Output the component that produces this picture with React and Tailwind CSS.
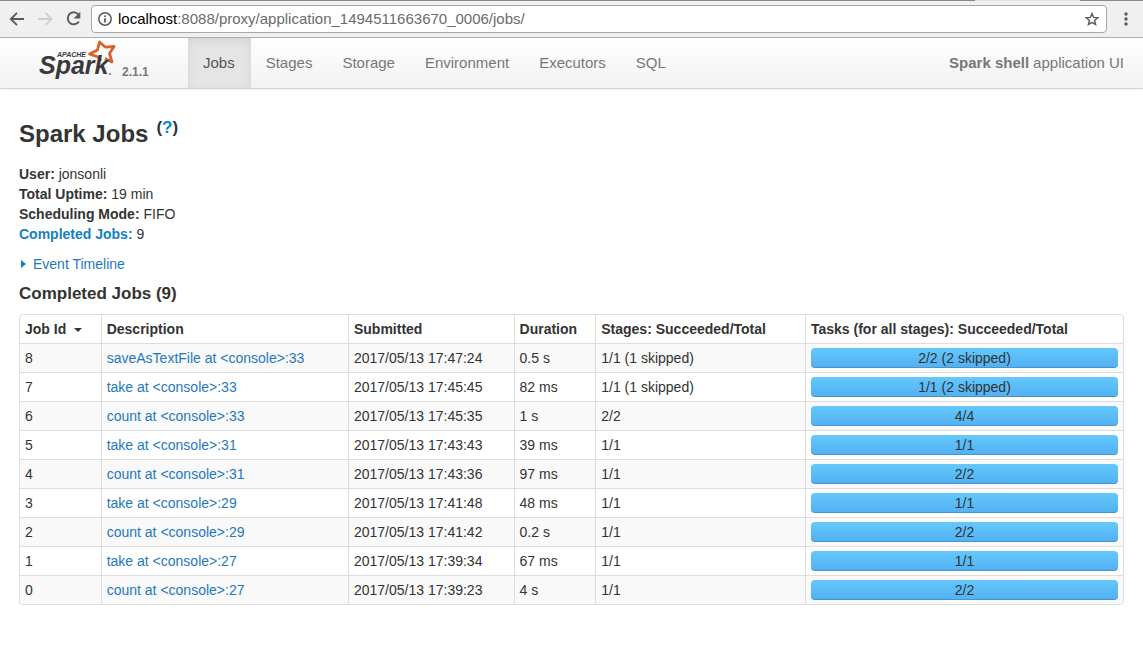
import React from 'react';

const tabs = ['Jobs', 'Stages', 'Storage', 'Environment', 'Executors', 'SQL'];

const jobs = [
  [8, 'saveAsTextFile at <console>:33', '2017/05/13 17:47:24', '0.5 s', '1/1 (1 skipped)', '2/2 (2 skipped)'],
  [7, 'take at <console>:33', '2017/05/13 17:45:45', '82 ms', '1/1 (1 skipped)', '1/1 (2 skipped)'],
  [6, 'count at <console>:33', '2017/05/13 17:45:35', '1 s', '2/2', '4/4'],
  [5, 'take at <console>:31', '2017/05/13 17:43:43', '39 ms', '1/1', '1/1'],
  [4, 'count at <console>:31', '2017/05/13 17:43:36', '97 ms', '1/1', '2/2'],
  [3, 'take at <console>:29', '2017/05/13 17:41:48', '48 ms', '1/1', '1/1'],
  [2, 'count at <console>:29', '2017/05/13 17:41:42', '0.2 s', '1/1', '2/2'],
  [1, 'take at <console>:27', '2017/05/13 17:39:34', '67 ms', '1/1', '1/1'],
  [0, 'count at <console>:27', '2017/05/13 17:39:23', '4 s', '1/1', '2/2'],
];

const columns = [
  ['Job Id', 'w-[7.4%]'],
  ['Description', 'w-[22.4%]'],
  ['Submitted', 'w-[15%]'],
  ['Duration', 'w-[7.4%]'],
  ['Stages: Succeeded/Total', 'w-[19%]'],
  ['Tasks (for all stages): Succeeded/Total', 'w-[28.8%]'],
];

function BrowserBar() {
  return (
    <div className="border-b border-[#b0aeb0] bg-[#f1f0f1]">
      <div className="flex h-px">
        <div className="flex-1 bg-[#8b8789]" />
        <div className="w-[105px] bg-[#e4e2e4]" />
        <div className="w-[63px] bg-[#8b8789]" />
      </div>
      <div className="flex h-9 items-center pr-2.5 pl-[9px]">
        <button aria-label="Back" className="mr-3 text-[#5a5a5a]">
          <svg width="16" height="16" viewBox="0 0 16 16" fill="none" stroke="currentColor" strokeWidth="1.900">
            <path d="M15 8H2.500M8 1.800 1.800 8 8 14.200" />
          </svg>
        </button>
        <button aria-label="Forward" disabled className="mr-3 text-[#cfcfcf]">
          <svg width="16" height="16" viewBox="0 0 16 16" fill="none" stroke="currentColor" strokeWidth="1.900">
            <path d="M1 8h13M8.500 1.800 14.700 8l-6.200 6.200" />
          </svg>
        </button>
        <button aria-label="Reload" className="mr-2 text-[#5a5a5a]">
          <svg width="18" height="18" viewBox="0 0 18 18" fill="none" stroke="currentColor" strokeWidth="2">
            <path d="M13.800 5A6 6 0 1 0 13.900 11.500" />
            <path d="M15.300 1.800v6.700H8.600z" fill="currentColor" stroke="none" />
          </svg>
        </button>
        <div className="flex h-7 min-w-0 flex-1 items-center rounded border border-[#a9a7a9] bg-white pr-[7px] pl-1.5">
          <svg className="mr-1.5 shrink-0" width="14" height="14" viewBox="0 0 14 14" fill="none" stroke="#5a5a5a">
            <circle cx="7" cy="7" r="6.200" strokeWidth="1.500" />
            <path d="M7 6.200V10.500M7 3.400V5" strokeWidth="1.800" />
          </svg>
          <div className="min-w-0 flex-1 truncate text-[15px] leading-5 text-[#6b6b6b]">
            <span className="text-black">localhost</span>:8088/proxy/application_1494511663670_0006/jobs/
          </div>
          <button aria-label="Bookmark this page" className="text-[#5a5a5a]">
            <svg width="14" height="14" viewBox="0 0 14 14" fill="none" stroke="currentColor" strokeWidth="1.400">
              <path d="m7 1.500 1.600 3.900 4.200.3-3.200 2.700 1 4.100L7 10.300l-3.600 2.200 1-4.100L1.200 5.700l4.200-.3z" />
            </svg>
          </button>
        </div>
        <button aria-label="Menu" className="ml-3 text-[#5a5a5a]">
          <svg width="14" height="16" viewBox="0 0 14 16" fill="currentColor">
            <circle cx="7" cy="3" r="1.700" />
            <circle cx="7" cy="8" r="1.700" />
            <circle cx="7" cy="13" r="1.700" />
          </svg>
        </button>
      </div>
    </div>
  );
}

function SparkLogo() {
  return (
    <svg className="shrink-0" width="80" height="44" viewBox="0 0 80 44" role="img" aria-label="Apache Spark">
      <path
        d="M62.500 23 61.500 19.500 51.500 16 59.500 12 61.500 4 67.500 9.200 76 8.500 71.500 15.500 74 24 67 20.500"
        fill="none"
        stroke="#d9622b"
        strokeWidth="2.800"
        strokeLinejoin="round"
      />
      <text x="1" y="36" fontFamily="Liberation Sans, Arial, sans-serif" fontSize="25" fontWeight="700" fontStyle="italic" fill="#3a383b">Spark</text>
      <text x="19" y="19" fontFamily="Liberation Sans, Arial, sans-serif" fontSize="7" fontWeight="700" fontStyle="italic" fill="#3a383b">APACHE</text>
      <path d="M71 36h2" stroke="#3a383b" strokeWidth="1" />
    </svg>
  );
}

function NavBar() {
  return (
    <header className="flex h-[51px] border-b border-[#d4d4d4] bg-gradient-to-b from-white to-[#f2f2f2] text-[15px] text-[#777777] shadow-[0_1px_3px_rgba(0,0,0,0.06)]">
      <a href="#" className="flex w-[188px] shrink-0 pl-[38px]">
        <SparkLogo />
        <span className="ml-1 pt-6 text-[12px] leading-5 font-bold">2.1.1</span>
      </a>
      <nav className="flex">
        {tabs.map((tab, i) => (
          <a
            key={tab}
            href="#"
            className={
              i === 0
                ? 'flex items-center bg-[#e5e5e5] pr-4 pl-[15px] text-[#555555] shadow-[inset_0_3px_8px_rgba(0,0,0,0.08)]'
                : 'flex items-center px-[15px]'
            }
          >
            {tab}
          </a>
        ))}
      </nav>
      <p className="ml-auto flex items-center gap-1 pr-[19px]">
        <strong>Spark shell</strong> application UI
      </p>
    </header>
  );
}

function JobsTable() {
  return (
    <table className="w-full table-fixed border-separate border-spacing-0 rounded border border-l-0 border-[#dddddd] text-left">
      <thead>
        <tr>
          {columns.map(([label, width], i) => (
            <th key={label} className={`${width} border-l border-[#dddddd] px-[5px] py-1 font-bold whitespace-nowrap first:rounded-tl`}>
              {label}
              {i === 0 && (
                <svg className="ml-2 inline-block" width="8" height="4" viewBox="0 0 8 4" fill="#333333">
                  <path d="M0 0h8L4 4z" />
                </svg>
              )}
            </th>
          ))}
        </tr>
      </thead>
      <tbody>
        {jobs.map(([id, description, submitted, duration, stages, tasks]) => (
          <tr key={id} className="odd:bg-[#f9f9f9] [&>td]:border-t [&>td]:border-l [&>td]:border-[#dddddd] [&>td]:px-[5px] [&>td]:py-1">
            <td>{id}</td>
            <td><a href="#" className="text-[#1f78bf]">{description}</a></td>
            <td>{submitted}</td>
            <td>{duration}</td>
            <td>{stages}</td>
            <td>
              <div className="h-5 rounded bg-gradient-to-b from-[#64c8fc] to-[#52b0f2] text-center shadow-[inset_0_-1px_0_rgba(0,0,0,0.15)]">
                {tasks}
              </div>
            </td>
          </tr>
        ))}
      </tbody>
    </table>
  );
}

export default function App() {
  return (
    <div className="min-h-screen bg-white font-['Liberation_Sans',Arial,sans-serif] text-[14px] leading-5 text-[#333333]">
      <BrowserBar />
      <NavBar />
      <main className="px-[19px] pt-[25px]">
        <h1 className="mb-2.5 flex gap-2 text-[24px] leading-10 font-bold">
          Spark Jobs
          <sup className="top-0 text-[17px] leading-7">
            (<a href="#" className="text-[#0088cc]">?</a>)
          </sup>
        </h1>
        <ul>
          <li><strong>User:</strong> jonsonli</li>
          <li><strong>Total Uptime:</strong> 19 min</li>
          <li><strong>Scheduling Mode:</strong> FIFO</li>
          <li><a href="#completed" className="font-bold text-[#1580c4]">Completed Jobs:</a> 9</li>
        </ul>
        <button className="mt-2.5 flex items-center gap-[7px] pl-0.5 text-[#1f78bf]">
          <svg width="5" height="8" viewBox="0 0 5 8" fill="#0088cc">
            <path d="M0 0v8l5-4z" />
          </svg>
          Event Timeline
        </button>
        <h2 id="completed" className="mt-2.5 mb-2.5 text-[17px] leading-5 font-bold">Completed Jobs (9)</h2>
        <JobsTable />
      </main>
    </div>
  );
}
